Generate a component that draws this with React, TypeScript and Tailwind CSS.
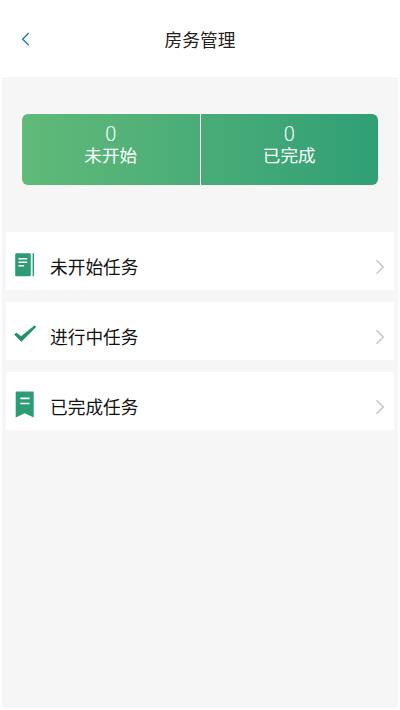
import type { ReactNode } from 'react';

type Task = {
  label: string;
  icon: ReactNode;
};

const stats = [
  { label: '未开始', count: 0 },
  { label: '已完成', count: 0 },
];

function NotebookIcon() {
  return (
    <svg className="ml-px h-6 w-5" viewBox="0 0 20 24" fill="none">
      <rect x="0.2" y="0.3" width="15.6" height="23" rx="1.3" fill="#2c9c74" />
      <path d="M18.3 0.3v23" stroke="#2c9c74" strokeWidth="1.4" />
      <path d="M3.5 5.7h8.7M3.5 9.2h8.7M3.5 12.7h5.7" stroke="#fff" strokeWidth="1.6" />
    </svg>
  );
}

function CheckIcon() {
  return (
    <svg className="h-6 w-6 -translate-y-px" viewBox="0 0 24 24" fill="#248f6c">
      <path d="M0.6 12.6l1.6-1.6 4.9 3.6L20.6 3.7l1.2 1.2L7.3 19.4z" stroke="#248f6c" strokeWidth="0.7" strokeLinejoin="round" />
    </svg>
  );
}

function BookmarkIcon() {
  return (
    <svg className="ml-px h-[27px] w-5 -translate-y-px" viewBox="0 0 20 27" fill="none">
      <path d="M1.8 0.5h15.8a1 1 0 0 1 1.1 1.1v24.9l-9-4.3-9 4.3V1.6a1 1 0 0 1 1.1-1.1z" fill="#2c9c74" />
      <path d="M5.3 7.4h9.2M5.3 12.5h9.2" stroke="#fff" strokeWidth="1.6" />
    </svg>
  );
}

const tasks: Task[] = [
  { label: '未开始任务', icon: <NotebookIcon /> },
  { label: '进行中任务', icon: <CheckIcon /> },
  { label: '已完成任务', icon: <BookmarkIcon /> },
];

export default function App() {
  return (
    <div className="flex h-[710px] w-[400px] flex-col bg-white pb-0.5 font-[Roboto,'Noto_Sans_CJK_SC',sans-serif]">
      <header className="grid h-[77px] shrink-0 grid-cols-[1fr_auto_1fr] items-center">
        <button className="ml-[21px] w-fit" aria-label="返回">
          <svg className="h-[14px] w-[9px]" viewBox="0 0 9 14" fill="none">
            <path d="M7.7 1L1.7 7.2l6 6" stroke="#2478be" strokeWidth="1.4" />
          </svg>
        </button>
        <h1 className="pt-[5px] text-[17.7px] text-[#222]">房务管理</h1>
      </header>

      <main className="mx-0.5 flex-1 bg-[#f6f6f6] px-1">
        <section className="mx-4 mt-[36.5px] flex h-[71px] overflow-hidden rounded-md bg-linear-to-r from-[#60ba78] to-[#2f9f76] text-white">
          {stats.map((stat) => (
            <div
              key={stat.label}
              className="flex flex-1 flex-col items-center border-white pt-[9px] first:border-r"
            >
              <span className="text-xl leading-[22px] font-light">{stat.count}</span>
              <span className="text-[17.6px] leading-[22px]">{stat.label}</span>
            </div>
          ))}
        </section>

        <ul className="mt-[47.5px] flex flex-col gap-3">
          {tasks.map((task) => (
            <li key={task.label} className="flex h-[58px] items-center bg-white pr-[9px] pl-2 pt-3">
              <span className="flex w-9 -translate-y-[2px]">{task.icon}</span>
              <span className="pt-0.5 text-[17.7px] leading-6 text-[#111]">{task.label}</span>
              <svg className="ml-auto h-4 w-[10px]" viewBox="0 0 10 16" fill="none">
                <path d="M1.5 1.3l6.8 6.7-6.8 6.7" stroke="#c4c4c4" strokeWidth="1.4" />
              </svg>
            </li>
          ))}
        </ul>
      </main>
    </div>
  );
}
